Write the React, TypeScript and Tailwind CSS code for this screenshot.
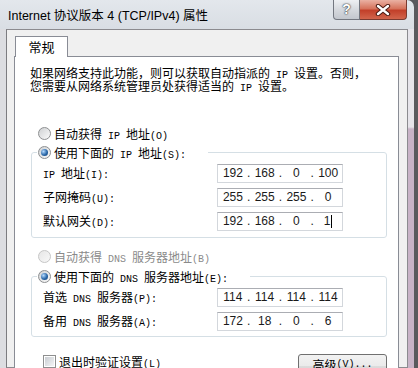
import React from 'react'

const cjk = "font-['Noto_Sans_CJK_SC',sans-serif]"

// SimSun-like look: half-width runs get a 6px mono advance
const T: React.FC<{ s: string }> = ({ s }) => (
  <>
    {s.split(/([\u3000-\u9fff\uff00-\uffef]+)/).map((part, i) =>
      part === '' ? null : /[\u3000-\u9fff\uff00-\uffef]/.test(part) ? (
        <span key={i}>{part}</span>
      ) : (
        <span key={i} className="whitespace-pre font-['Liberation_Mono',monospace] text-[10px] leading-[6px]">
          {part}
        </span>
      )
    )}
  </>
)

const Radio: React.FC<{ checked?: boolean; disabled?: boolean }> = ({ checked, disabled }) => (
  <span
    className={
      disabled
        ? 'flex h-[13px] w-[13px] shrink-0 items-center justify-center rounded-full border border-[#c6c6c6] bg-[linear-gradient(135deg,#e6e6e6,#f8f8f8)]'
        : 'flex h-[13px] w-[13px] shrink-0 items-center justify-center rounded-full border border-[#8d8f91] bg-[linear-gradient(135deg,#cfd1d3,#fbfbfb)]'
    }
  >
    {checked && (
      <span className="h-[7px] w-[7px] rounded-full bg-[radial-gradient(circle_at_35%_35%,#b5dbff,#2a67a8_55%,#123f72)]" />
    )}
  </span>
)

const IpBox: React.FC<{ parts: string[]; caret?: boolean }> = ({ parts, caret }) => (
  <div className="flex h-[19px] w-[126px] items-center border border-[#d3d7dc] border-t-[#abadb3] bg-white pl-[1px] font-['Liberation_Sans',sans-serif] text-[12px] text-[#1a1a1a]">
    {parts.map((p, i) => (
      <React.Fragment key={i}>
        {i > 0 && <span className="w-[4px] text-center">.</span>}
        <span className="flex w-[28px] items-center justify-center">
          {p}
          {caret && i === 3 && <span className="ml-[1px] inline-block h-[13px] w-px bg-black" />}
        </span>
      </React.Fragment>
    ))}
  </div>
)

const Row: React.FC<{ label: string; parts: string[]; caret?: boolean }> = ({ label, parts, caret }) => (
  <div className="flex h-[19px] items-center">
    <span className="w-[185px] pl-[11px]">
      <T s={label} />
    </span>
    <IpBox parts={parts} caret={caret} />
  </div>
)

const Group: React.FC<{ title: string; children: React.ReactNode; className: string }> = ({ title, children, className }) => (
  <fieldset className={className}>
    <legend className="ml-[5px] pl-[1px] pr-[22px]">
      <div className="flex h-[16px] items-center gap-[3px]">
        <Radio checked />
        <span>
          <T s={title} />
        </span>
      </div>
    </legend>
    <div className="mt-[3px] flex flex-col gap-[5px]">{children}</div>
  </fieldset>
)

export default function App() {
  return (
    <div className={`flex h-[368px] w-[418px] overflow-hidden bg-[#58585c] ${cjk}`}>
      <div className="flex w-[414px] flex-col overflow-hidden rounded-tr-[7px] bg-[linear-gradient(to_bottom,#e3e7ec,#d9dee4_28px,#dcdde2)]">
        {/* title bar */}
        <div className="flex h-[29px] shrink-0 justify-between">
          <span className="pl-[8px] pt-[8px] font-['Liberation_Sans','Noto_Sans_CJK_SC',sans-serif] text-[12.5px] leading-[16px] text-black">
            Internet 协议版本 4 (TCP/IPv4) 属性
          </span>
          <div className="mr-[7px] flex h-[20px]">
            <div className="flex w-[27px] items-center justify-center rounded-bl-[4px] border border-t-0 border-[#737780] bg-[linear-gradient(to_bottom,#eef0f3,#d6d9de_50%,#c3c7ce)] font-['Liberation_Sans',sans-serif] text-[14px] font-bold text-white [text-shadow:0_0_2px_#2d2d2d,0_0_1px_#2d2d2d]">
              ?
            </div>
            <div className="flex w-[47px] items-center justify-center rounded-br-[4px] border border-t-0 border-l-0 border-[#7a3a30] bg-[linear-gradient(to_bottom,#eab1a3,#d6735c_45%,#c2402a_55%,#d2654c)]">
              <svg width="16" height="12" viewBox="0 0 16 12">
                <path d="M3 2 L13 10 M13 2 L3 10" stroke="#4a1a12" strokeWidth="4.4" strokeLinecap="round" />
                <path d="M3 2 L13 10 M13 2 L3 10" stroke="#ffffff" strokeWidth="2.4" strokeLinecap="round" />
              </svg>
            </div>
          </div>
        </div>

        {/* body */}
        <div className="flex min-h-0 flex-1">
          <div className="w-[6px] bg-[#dcdde1]" />
          <div className="flex w-[402px] flex-col border border-[#8b8b8f] border-l-[#7c7c80] bg-[#f0f0f0] pl-[7px] pr-[8px] pt-[6px]">
            {/* tab */}
            <div className="relative z-10 -mb-px ml-[1px] flex h-[22px] w-[53px] items-center justify-center border border-b-0 border-[#898c95] bg-white text-[13px] text-black">
              常规
            </div>
            {/* tab panel */}
            <div className="flex-1 border border-[#898c95] bg-white text-[12px] leading-[12px] text-black">
              <p className="ml-[15px] mt-[9px] leading-[13px]">
                <T s="如果网络支持此功能，则可以获取自动指派的 IP 设置。否则，" />
                <br />
                <T s="您需要从网络系统管理员处获得适当的 IP 设置。" />
              </p>

              <div className="ml-[23px] mt-[34px] flex h-[16px] items-center gap-[3px]">
                <Radio />
                <span>
                  <T s="自动获得 IP 地址(O)" />
                </span>
              </div>

              <Group title="使用下面的 IP 地址(S):" className="ml-[16px] mt-[3px] w-[356px] rounded-[3px] border border-[#d5dfe5] pb-[6px]">
                <Row label="IP 地址(I):" parts={['192', '168', '0', '100']} />
                <Row label="子网掩码(U):" parts={['255', '255', '255', '0']} />
                <Row label="默认网关(D):" parts={['192', '168', '0', '1']} caret />
              </Group>

              <div className="ml-[23px] mt-[11px] flex h-[16px] items-center gap-[3px] text-[#8a8a8a]">
                <Radio disabled />
                <span>
                  <T s="自动获得 DNS 服务器地址(B)" />
                </span>
              </div>

              <Group title="使用下面的 DNS 服务器地址(E):" className="ml-[16px] mt-[4px] w-[356px] rounded-[3px] border border-[#d5dfe5] pb-[5px]">
                <Row label="首选 DNS 服务器(P):" parts={['114', '114', '114', '114']} />
                <Row label="备用 DNS 服务器(A):" parts={['172', '18', '0', '6']} />
              </Group>

              <div className="ml-[16px] mt-[17px] flex w-[356px] items-start justify-between">
                <div className="ml-[12px] mt-[1px] flex items-center gap-[3px]">
                  <span className="flex h-[13px] w-[13px] items-center justify-center border border-[#8e8f8f] bg-white">
                    <span className="h-[9px] w-[9px] bg-[linear-gradient(135deg,#c9cdd2,#f4f5f6)]" />
                  </span>
                  <span className="leading-[14px]">
                    <T s="退出时验证设置(L)" />
                  </span>
                </div>
                <div className="flex h-[23px] w-[89px] items-center justify-center rounded-[3px] border border-[#707070] bg-[linear-gradient(to_bottom,#f2f2f2,#ebebeb_50%,#dddddd_50%,#cfcfcf)]">
                  <T s="高级(V)..." />
                </div>
              </div>
            </div>
          </div>
          <div className="w-[6px] bg-[linear-gradient(to_bottom,#e6e4ea_0,#e6e4ea_98px,#c8b3c7_100px,#c8b3c7_100%)]" />
        </div>
      </div>
      <div className="w-[4px] bg-[#5a5a5e]" />
    </div>
  )
}
